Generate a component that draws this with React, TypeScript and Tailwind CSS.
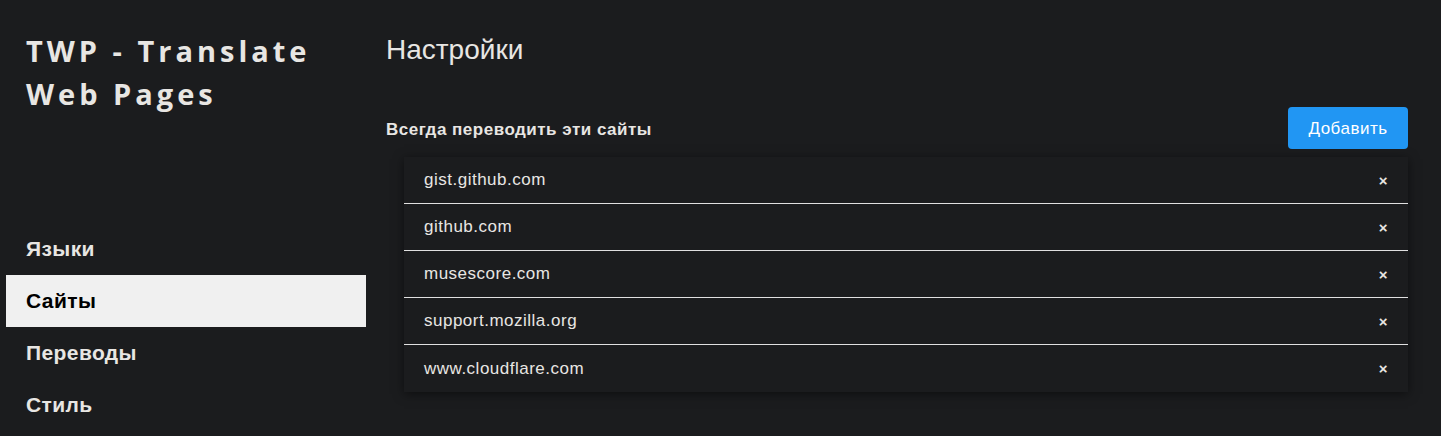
import React from 'react';

const sites = ['gist.github.com', 'github.com', 'musescore.com', 'support.mozilla.org', 'www.cloudflare.com'];
const menu = ['Языки', 'Сайты', 'Переводы', 'Стиль'];

const App: React.FC = () => {
  return (
    <div className="min-h-screen w-full bg-[#1b1c1e] text-[#e8e6e3] flex font-['Liberation_Sans',Arial,sans-serif]">
      <aside className="w-[360px] ml-[6px] shrink-0 flex flex-col">
        <h1 className="pl-[20px] pt-[29px] text-[29px] leading-[43px] font-bold tracking-[4px] font-['Open_Sans',sans-serif]">
          TWP - Translate Web Pages
        </h1>
        <nav className="mt-[108px]">
          {menu.map((m) => (
            <div
              key={m}
              className={`h-[52px] flex items-center pl-[20px] text-[21px] tracking-[0.4px] font-bold ${
                m === 'Сайты' ? 'bg-[#f0f0f0] text-black' : ''
              }`}
            >
              {m}
            </div>
          ))}
        </nav>
      </aside>

      <main className="flex-1 pl-[20px] pr-[33px] pt-[34px]">
        <h2 className="text-[28px] leading-[32px]">Настройки</h2>
        <div className="mt-[41px] flex items-center justify-between">
          <span className="text-[17px] tracking-[0.5px] font-bold pt-[3px]">Всегда переводить эти сайты</span>
          <button className="w-[120px] h-[42px] rounded bg-[#2196f3] text-white text-[17px] tracking-[0.5px] pt-[2px]">
            Добавить
          </button>
        </div>
        <ul className="mt-[8px] ml-[18px] shadow-[0_2px_10px_rgba(0,0,0,0.5)] bg-[#1b1c1e]">
          {sites.map((s, i) => (
            <li
              key={s}
              className={`h-[47px] flex items-center justify-between pl-[20px] pr-[20px] text-[17px] tracking-[0.5px] ${
                i < sites.length - 1 ? 'border-b border-[#e0e0e0]' : 'h-[46px]'
              }`}
            >
              <span>{s}</span>
              <span className="text-[15px] font-bold leading-none">×</span>
            </li>
          ))}
        </ul>
      </main>
    </div>
  );
};

export default App;
